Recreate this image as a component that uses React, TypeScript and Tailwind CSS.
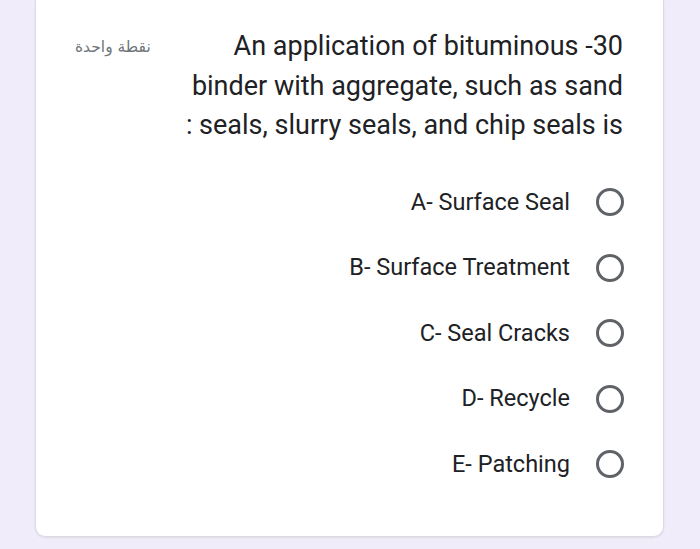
const options = [
  "A- Surface Seal",
  "B- Surface Treatment",
  "C- Seal Cracks",
  "D- Recycle",
  "E- Patching",
];

const questionLines = [
  "An application of bituminous -30",
  "binder with aggregate, such as sand",
  ": seals, slurry seals, and chip seals is",
];

export default function App() {
  return (
    <div className="h-[549px] w-[700px] overflow-hidden bg-[#f0ecf9] font-['Roboto',sans-serif]">
      <div className="ml-[35px] h-[537px] w-[629px] rounded-b-[10px] border-x border-b border-[#dcdae3] bg-white pl-[39px] pr-[40px] pt-[27px] shadow-[0_1px_2px_rgba(0,0,0,0.08)]">
        <div className="flex items-start justify-between">
          <span
            dir="rtl"
            className="mt-[10px] text-[15.5px] leading-[20px] text-[#70757a] font-['DejaVu_Sans',sans-serif]"
          >
            نقطة واحدة
          </span>
          <div className="text-right text-[27px] leading-[39.5px] text-[#202124]">
            {questionLines.map((line) => (
              <div key={line} className="whitespace-pre">
                {line}
              </div>
            ))}
          </div>
        </div>

        <div className="mt-[24px] flex flex-col">
          {options.map((opt) => (
            <OptionRow key={opt} label={opt} />
          ))}
        </div>
      </div>
    </div>
  );
}

function OptionRow({ label }: { label: string }) {
  return (
    <label className="flex h-[65.5px] items-center justify-end gap-[26px]">
      <span className="text-[23.5px] text-[#202124]">{label}</span>
      <span className="mr-[-1px] h-[28px] w-[28px] rounded-full border-[3px] border-[#5f6368]" />
    </label>
  );
}
